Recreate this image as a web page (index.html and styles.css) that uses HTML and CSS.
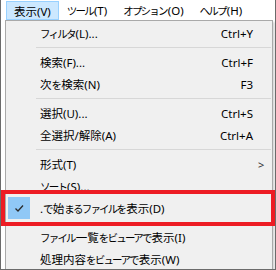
FILE: index.html
```html
<!DOCTYPE html>
<html>
  <head>
    <title>表示メニュー</title>
    <link rel="stylesheet" href="styles.css">
  </head>

  <body>
    <div class="screen">
      <nav class="menubar">
        <span class="menubar-item active">表示(V)</span>
        <span class="menubar-item"><span class="kana">ツール</span>(T)</span>
        <span class="menubar-item"><span class="kana">オプション</span>(O)</span>
        <span class="menubar-item"><span class="kana">ヘルプ</span>(H)</span>
      </nav>

      <ul class="dropdown">
        <li class="item"><span class="check"></span><span class="label"><span class="kana">フィルタ</span>(L)...</span><span class="key">Ctrl+Y</span><span class="arrow"></span></li>
        <li class="sep"></li>
        <li class="item"><span class="check"></span><span class="label">検索(F)...</span><span class="key">Ctrl+F</span><span class="arrow"></span></li>
        <li class="item"><span class="check"></span><span class="label">次<span class="kana">を</span>検索(N)</span><span class="key">F3</span><span class="arrow"></span></li>
        <li class="sep"></li>
        <li class="item"><span class="check"></span><span class="label">選択(U)...</span><span class="key">Ctrl+S</span><span class="arrow"></span></li>
        <li class="item"><span class="check"></span><span class="label">全選択/解除(A)</span><span class="key">Ctrl+A</span><span class="arrow"></span></li>
        <li class="sep"></li>
        <li class="item"><span class="check"></span><span class="label">形式(T)</span><span class="key"></span><span class="arrow">&gt;</span></li>
        <li class="item"><span class="check"></span><span class="label"><span class="kana">ソート</span>(S)...</span><span class="key"></span><span class="arrow"></span></li>
        <li class="item checked">
          <span class="check">
            <svg width="22" height="22" viewBox="0 0 22 22"><path d="M7.5 11.5 L10 14 L15 8.5" fill="none" stroke="#2b2b2b" stroke-width="1.3"/></svg>
          </span>
          <span class="label">.<span class="kana">で</span>始<span class="kana">まるファイルを</span>表示(D)</span><span class="key"></span><span class="arrow"></span>
        </li>
        <li class="sep"></li>
        <li class="item"><span class="check"></span><span class="label"><span class="kana">ファイル</span>一覧<span class="kana">をビューアで</span>表示(I)</span><span class="key"></span><span class="arrow"></span></li>
        <li class="item"><span class="check"></span><span class="label">処理内容<span class="kana">をビューアで</span>表示(W)</span><span class="key"></span><span class="arrow"></span></li>
      </ul>

      <div class="callout"></div>
    </div>
  </body>
</html>
```

FILE: styles.css
```css
body {
  margin: 0;
  font-family: "Noto Sans", "Noto Sans CJK JP", sans-serif;
  font-size: 11.5px;
  color: #000;
}
.kana {
  font-size: 10.5px;
  letter-spacing: -1.8px;
  margin-right: 1px;
}
.screen {
  position: relative;
  width: 276px;
  height: 270px;
  box-sizing: border-box;
  overflow: hidden;
  background: #fff;
  border-left: 1px solid #6b6b6b;
  border-right: 1px solid #6b6b6b;
  border-bottom: 1px solid #6b6b6b;
}
.menubar {
  display: flex;
  height: 20px;
  padding-left: 5px;
  background: #fff;
}
.menubar-item {
  display: flex;
  align-items: center;
  white-space: nowrap;
  padding: 0 7px;
  margin-top: 1px;
  height: 19px;
  border: 1px solid transparent;
  box-sizing: border-box;
}
.menubar-item.active {
  background: #cce8ff;
  border-color: #99d1ff;
}

.dropdown {
  list-style: none;
  margin: 0 0 0 4px;
  padding: 1px 0;
  width: 268px;
  box-sizing: border-box;
  background: #f0f0f0;
  border: 1px solid #a9a9a9;
  box-shadow: 2px 2px 2px rgba(0, 0, 0, 0.15);
}
.item {
  display: grid;
  grid-template-columns: 34px 1fr auto 19px;
  align-items: center;
  height: 22px;
  white-space: nowrap;
}
.check {
  height: 22px;
  margin-left: 2px;
  width: 22px;
}
.checked .check {
  background: #90c8f6;
}
.check svg {
  display: block;
}
.key {
  text-align: right;
}
.arrow {
  padding-left: 5px;
  font-size: 11px;
  color: #333;
}
.sep {
  height: 7px;
  margin: 0 1px 0 30px;
  box-sizing: border-box;
  border-top: 3px solid transparent;
  border-bottom: 3px solid transparent;
  background: #d7d7d7;
  background-clip: content-box;
}

.callout {
  position: absolute;
  left: 0;
  top: 190px;
  width: 274px;
  height: 36px;
  box-sizing: border-box;
  border: 4px solid #ed1c24;
}
```
